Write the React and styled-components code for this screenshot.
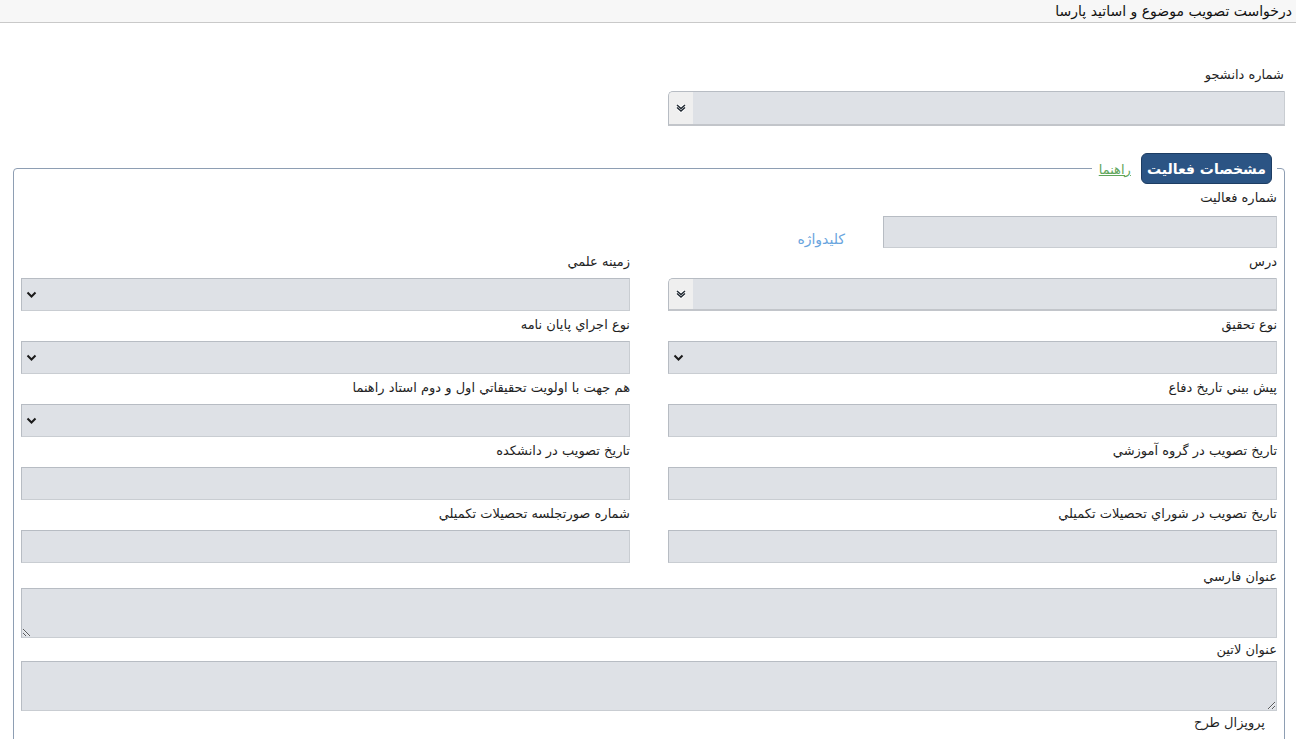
import React from 'react';
import styled, { createGlobalStyle } from 'styled-components';

const GlobalStyle = createGlobalStyle`
  html {
    scrollbar-width: none;
  }
  body {
    margin: 0;
    background: #ffffff;
    font-family: "DejaVu Sans", sans-serif;
    font-size: 13px;
    color: #1f1f1f;
  }
`;

const Page = styled.div`
  direction: rtl;
`;

const TitleBar = styled.div`
  height: 22px;
  background: #f7f7f7;
  border-bottom: 1px solid #c9c9c9;
  padding: 0 4px;
  display: flex;
  align-items: center;
  font-size: 14px;
  color: #111;
`;

const Content = styled.div`
  padding: 42px 11px 0 11px;
`;

const TopField = styled.div`
  width: 617px;
  display: flex;
  flex-direction: column;
  margin-bottom: 27px;
`;

const Label = styled.label`
  display: block;
  line-height: 20px;
  margin: ${(p) => (p.$tight ? '2px 0 1px' : '4px 0 6px')};
  padding-right: ${(p) => p.$indent || 0}px;
  color: #1f1f1f;
  white-space: nowrap;
`;

const TopLabel = styled(Label)`
  margin: 0 1px 6px 0;
`;

const Fieldset = styled.fieldset`
  margin: 0 0 0 2px;
  padding: 0 7px 40px 7px;
  border: 1px solid #8e9eb3;
  border-radius: 4px;
  min-width: 0;
`;

const Legend = styled.legend`
  padding: 0 5px 0 7px;
  display: flex;
  align-items: center;
  gap: 10px;
`;

const TabButton = styled.button`
  height: 31px;
  padding: 0 5px;
  background: #2b5484;
  border: 1px solid #1d3d63;
  border-radius: 6px;
  color: #ffffff;
  font-family: "DejaVu Sans", sans-serif;
  font-size: 14px;
  font-weight: bold;
`;

const HelpLink = styled.a`
  color: #5ea55a;
  text-decoration: underline;
  font-size: 13px;
  padding-top: 2px;
`;

const KeyRow = styled.div`
  display: flex;
  gap: 38px;
  margin-top: 2px;
`;

const Keyword = styled.span`
  align-self: flex-end;
  line-height: 18px;
  color: #6aa5de;
  font-size: 14px;
`;

const Grid = styled.div`
  display: grid;
  grid-template-columns: 1fr 1fr;
  column-gap: 38px;
  margin-bottom: 2px;
`;

const Field = styled.div`
  display: flex;
  flex-direction: column;
  min-width: 0;
`;

const baseBox = `
  box-sizing: border-box;
  width: 100%;
  background: #dee1e6;
  border: 1px solid #c9cdd2;
  border-top-color: #b7bcc3;
  border-left-color: #b7bcc3;
  font-family: "DejaVu Sans", sans-serif;
  font-size: 13px;
  outline: none;
`;

const TextInput = styled.input`
  ${baseBox}
  height: ${(p) => p.$h || 33}px;
  width: ${(p) => (p.$w ? `${p.$w}px` : '100%')};
  padding: 0 6px;
`;

const SelectWrap = styled.div`
  position: relative;
  height: ${(p) => p.$h || 33}px;
`;

const Select = styled.select`
  ${baseBox}
  appearance: none;
  height: 100%;
  padding: 0 8px;
  border-radius: ${(p) => (p.$fancy ? '5px 0 0 0' : '0')};
  border-bottom: ${(p) => (p.$fancy ? '2px solid #c2c5ca' : '1px solid #c9cdd2')};
`;

const ArrowBox = styled.span`
  position: absolute;
  left: 1px;
  top: 1px;
  bottom: 2px;
  width: 24px;
  background: #efefef;
  border-radius: 4px 0 0 0;
  display: flex;
  align-items: center;
  justify-content: center;
  pointer-events: none;
`;

const Chevron = styled.span`
  position: absolute;
  left: 5px;
  top: 0;
  bottom: 0;
  display: flex;
  align-items: center;
  pointer-events: none;
`;

const TextArea = styled.textarea`
  ${baseBox}
  display: block;
  height: 50px;
  resize: vertical;
  padding: 4px 6px;
`;

const FullField = styled.div`
  display: flex;
  flex-direction: column;
`;

const DoubleChevron = () => (
  <svg width="12" height="10" viewBox="0 0 12 10">
    <path d="M2 2 L6 5.5 L10 2" fill="none" stroke="#ffffff" strokeWidth="3.2" strokeLinejoin="round" />
    <path d="M2 4.5 L6 8 L10 4.5" fill="none" stroke="#ffffff" strokeWidth="3.2" strokeLinejoin="round" />
    <path d="M2 2 L6 5.5 L10 2" fill="none" stroke="#222a33" strokeWidth="1.5" />
    <path d="M2 4.5 L6 8 L10 4.5" fill="none" stroke="#222a33" strokeWidth="1.5" />
  </svg>
);

const SingleChevron = () => (
  <svg width="11" height="8" viewBox="0 0 11 8">
    <path d="M1.5 1.5 L5.5 5.5 L9.5 1.5" fill="none" stroke="#1a1a1a" strokeWidth="2" />
  </svg>
);

const SelectField = ({ fancy, h }) => (
  <SelectWrap $h={h}>
    <Select $fancy={fancy}>
      <option value=""></option>
    </Select>
    {fancy ? (
      <ArrowBox>
        <DoubleChevron />
      </ArrowBox>
    ) : (
      <Chevron>
        <SingleChevron />
      </Chevron>
    )}
  </SelectWrap>
);

const gridRows = [
  [
    { label: 'درس', type: 'fancy' },
    { label: 'زمينه علمي', type: 'select' },
  ],
  [
    { label: 'نوع تحقيق', type: 'select' },
    { label: 'نوع اجراي پايان نامه', type: 'select' },
  ],
  [
    { label: 'پيش بيني تاريخ دفاع', type: 'input' },
    { label: 'هم جهت با اولويت تحقيقاتي اول و دوم استاد راهنما', type: 'select' },
  ],
  [
    { label: 'تاريخ تصويب در گروه آموزشي', type: 'input' },
    { label: 'تاريخ تصويب در دانشكده', type: 'input' },
  ],
  [
    { label: 'تاريخ تصويب در شوراي تحصيلات تكميلي', type: 'input' },
    { label: 'شماره صورتجلسه تحصيلات تكميلي', type: 'input' },
  ],
];

const renderControl = (type) => {
  if (type === 'fancy') return <SelectField fancy />;
  if (type === 'select') return <SelectField />;
  return <TextInput type="text" />;
};

export default function App() {
  return (
    <>
      <GlobalStyle />
      <Page>
        <TitleBar>درخواست تصويب موضوع و اساتيد پارسا</TitleBar>
        <Content>
          <TopField>
            <TopLabel>شماره دانشجو</TopLabel>
            <SelectField fancy h={35} />
          </TopField>

          <Fieldset>
            <Legend>
              <TabButton type="button">مشخصات فعاليت</TabButton>
              <HelpLink href="#">راهنما</HelpLink>
            </Legend>

            <FullField>
              <Label>شماره فعاليت</Label>
              <KeyRow>
                <TextInput type="text" $w={394} $h={32} />
                <Keyword>كليدواژه</Keyword>
              </KeyRow>
            </FullField>

            <Grid>
              {gridRows.flat().map((f) => (
                <Field key={f.label}>
                  <Label>{f.label}</Label>
                  {renderControl(f.type)}
                </Field>
              ))}
            </Grid>

            <FullField>
              <Label $tight>عنوان فارسي</Label>
              <TextArea />
            </FullField>
            <FullField>
              <Label $tight>عنوان لاتين</Label>
              <TextArea dir="ltr" />
            </FullField>
            <FullField>
              <Label $tight $indent={12}>پروپزال طرح</Label>
            </FullField>
          </Fieldset>
        </Content>
      </Page>
    </>
  );
}
